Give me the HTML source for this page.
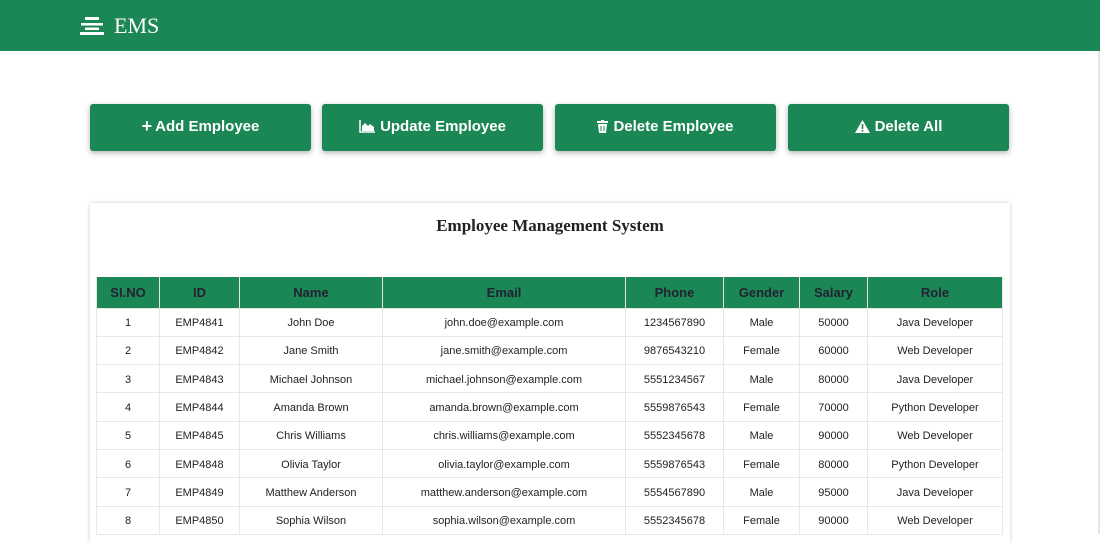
<!DOCTYPE html>
<html><head><style>
*{box-sizing:border-box;margin:0;padding:0}
body{width:1100px;height:534px;overflow:hidden;background:#fff;font-family:"Liberation Sans",sans-serif;position:relative}
.nav{height:51px;background:#1b8754;display:flex;align-items:center;padding-left:80px;color:#fff;font-family:"Liberation Serif",serif;font-size:22px}
.nav svg{margin-right:10px}
.btn{position:absolute;top:104px;height:47px;width:221px;background:#1b8754;border-radius:3px;color:#fff;font-size:15px;font-weight:bold;display:flex;align-items:center;justify-content:center;box-shadow:0 2px 6px rgba(0,0,0,.3);padding-bottom:2px}
.btn svg{margin-right:5px}
.card{position:absolute;left:90px;top:203px;width:920px;height:340px;box-shadow:0 0 4px rgba(0,0,0,.2);background:#fff}
.card h1{font-family:"Liberation Serif",serif;font-size:17px;text-align:center;margin-top:13px;color:#222}
table{position:absolute;left:6px;top:74px;border-collapse:collapse;width:907px;font-size:11px;color:#222}
th{background:#1b8754;color:#223;font-size:13px;height:31px;border:1px solid #e4e4e4;border-top:none}
td{height:28.3px;text-align:center;border:1px solid #e8e8e8;padding-top:2px}
.sb{position:absolute;right:0;top:51px;width:2px;height:483px;background:#e6e6e6}
</style></head><body>
<div class="nav"><svg width="24" height="18" viewBox="0 0 24 18"><rect x="5" y="0" width="14" height="3" fill="#fff"/><rect x="1" y="6" width="22" height="2.5" fill="#fff"/><rect x="5" y="10.5" width="14" height="2.5" fill="#fff"/><rect x="0" y="15" width="24" height="3" fill="#fff"/></svg>EMS</div>
<div class="sb"></div>
<div class="btn" style="left:90px"><span style="font-size:18px;margin-right:3px">+</span>Add Employee</div>
<div class="btn" style="left:322px"><svg width="16" height="13" viewBox="0 0 16 13"><path d="M1 0v12h15" stroke="#fff" stroke-width="1.5" fill="none"/><path d="M3 11V6l3-3 3 3 2-2 4 3v4z" fill="#fff"/></svg>Update Employee</div>
<div class="btn" style="left:555px"><svg width="11" height="13" viewBox="0 0 11 13"><rect x="0" y="1" width="11" height="2" fill="#fff"/><rect x="4" y="0" width="3" height="2" fill="#fff"/><path d="M1 4h9l-1 9H2z" fill="#fff"/><path d="M4 6v5M7 6v5" stroke="#1b8754"/></svg>Delete Employee</div>
<div class="btn" style="left:788px"><svg width="15" height="13" viewBox="0 0 15 13"><path d="M7.5 0L15 13H0z" fill="#fff"/><rect x="6.7" y="4" width="1.6" height="5" fill="#1b8754"/><rect x="6.7" y="10" width="1.6" height="1.6" fill="#1b8754"/></svg>Delete All</div>
<div class="card"><h1>Employee Management System</h1>
<table>
<tr><th style="width:63px">SI.NO</th><th style="width:80px">ID</th><th style="width:143px">Name</th><th style="width:243px">Email</th><th style="width:98px">Phone</th><th style="width:76px">Gender</th><th style="width:68px">Salary</th><th>Role</th></tr>
<tr><td>1</td><td>EMP4841</td><td>John Doe</td><td>john.doe@example.com</td><td>1234567890</td><td>Male</td><td>50000</td><td>Java Developer</td></tr>
<tr><td>2</td><td>EMP4842</td><td>Jane Smith</td><td>jane.smith@example.com</td><td>9876543210</td><td>Female</td><td>60000</td><td>Web Developer</td></tr>
<tr><td>3</td><td>EMP4843</td><td>Michael Johnson</td><td>michael.johnson@example.com</td><td>5551234567</td><td>Male</td><td>80000</td><td>Java Developer</td></tr>
<tr><td>4</td><td>EMP4844</td><td>Amanda Brown</td><td>amanda.brown@example.com</td><td>5559876543</td><td>Female</td><td>70000</td><td>Python Developer</td></tr>
<tr><td>5</td><td>EMP4845</td><td>Chris Williams</td><td>chris.williams@example.com</td><td>5552345678</td><td>Male</td><td>90000</td><td>Web Developer</td></tr>
<tr><td>6</td><td>EMP4848</td><td>Olivia Taylor</td><td>olivia.taylor@example.com</td><td>5559876543</td><td>Female</td><td>80000</td><td>Python Developer</td></tr>
<tr><td>7</td><td>EMP4849</td><td>Matthew Anderson</td><td>matthew.anderson@example.com</td><td>5554567890</td><td>Male</td><td>95000</td><td>Java Developer</td></tr>
<tr><td>8</td><td>EMP4850</td><td>Sophia Wilson</td><td>sophia.wilson@example.com</td><td>5552345678</td><td>Female</td><td>90000</td><td>Web Developer</td></tr>
</table></div>
</body></html>
